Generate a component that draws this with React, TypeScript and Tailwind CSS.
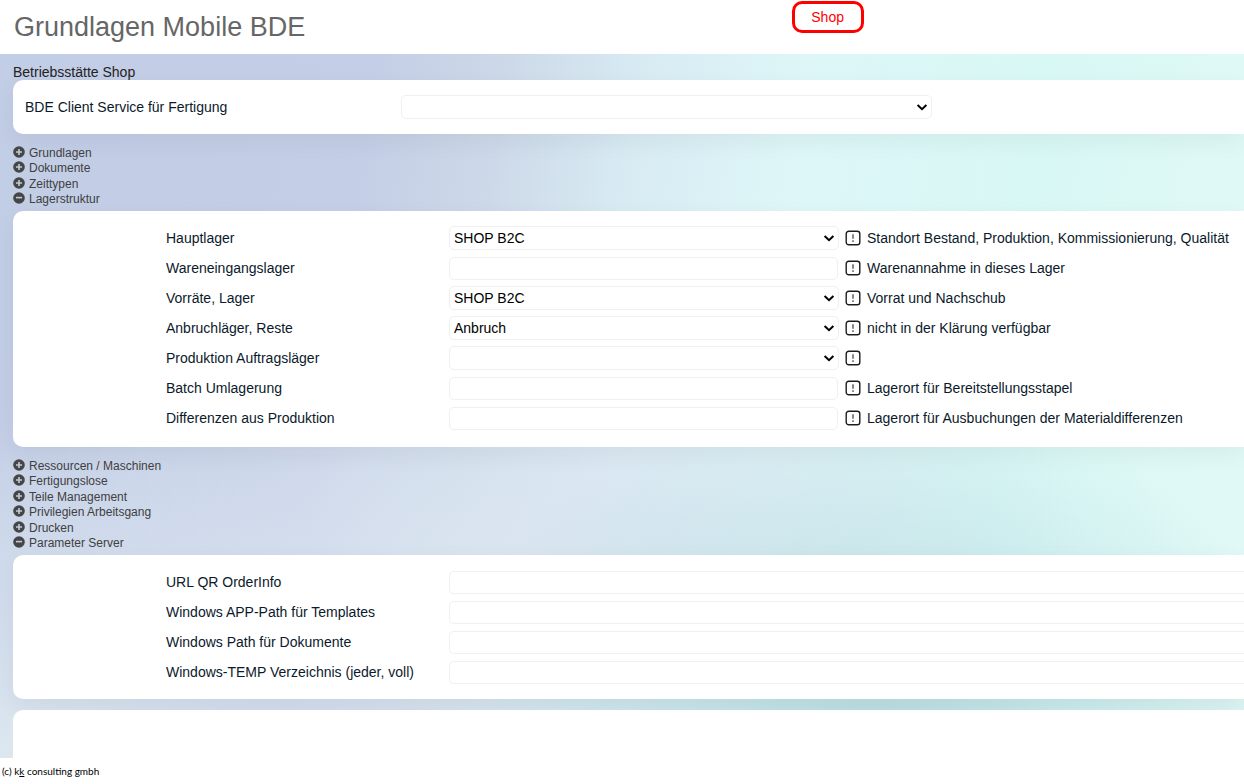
import React from 'react';

interface StorageField {
  id: string;
  label: string;
  type: 'select' | 'input';
  value?: string;
  note?: string;
}

const storageFields: StorageField[] = [
  { id: 'hauptlager', label: 'Hauptlager', type: 'select', value: 'SHOP B2C', note: 'Standort Bestand, Produktion, Kommissionierung, Qualität' },
  { id: 'wareneingang', label: 'Wareneingangslager', type: 'input', note: 'Warenannahme in dieses Lager' },
  { id: 'vorraete', label: 'Vorräte, Lager', type: 'select', value: 'SHOP B2C', note: 'Vorrat und Nachschub' },
  { id: 'anbruch', label: 'Anbruchläger, Reste', type: 'select', value: 'Anbruch', note: 'nicht in der Klärung verfügbar' },
  { id: 'auftrag', label: 'Produktion Auftragsläger', type: 'select' },
  { id: 'batch', label: 'Batch Umlagerung', type: 'input', note: 'Lagerort für Bereitstellungsstapel' },
  { id: 'differenzen', label: 'Differenzen aus Produktion', type: 'input', note: 'Lagerort für Ausbuchungen der Materialdifferenzen' }
];

const serverFields = [
  { id: 'qr', label: 'URL QR OrderInfo' },
  { id: 'templates', label: 'Windows APP-Path für Templates' },
  { id: 'dokumente', label: 'Windows Path für Dokumente' },
  { id: 'temp', label: 'Windows-TEMP Verzeichnis (jeder, voll)' }
];

function ToggleIcon({ open }: { open: boolean }) {
  return (
    <svg className="h-3 w-3 shrink-0" viewBox="0 0 12 12" aria-hidden="true">
      <circle cx="6" cy="6" r="5.8" fill="#464646" />
      <path d={open ? 'M3 5.6h6' : 'M3 6h6M6 3v6'} stroke="#c3cad8" strokeWidth="1.6" />
    </svg>
  );
}

function NoteIcon() {
  return (
    <svg className="h-4 w-4 shrink-0" viewBox="0 0 16 16" fill="none" aria-hidden="true">
      <rect x="1.2" y="1.2" width="13.6" height="13.6" rx="2.6" stroke="#1c1c1c" strokeWidth="1.4" />
      <path d="M8 4.2v4.6M8 10.3v1.6" stroke="#555" strokeWidth="1.4" />
    </svg>
  );
}

function SectionToggle({ label, open = false }: { label: string; open?: boolean }) {
  return (
    <button type="button" aria-expanded={open} className="flex items-start gap-1 text-xs leading-[15px] text-[#404040]">
      <ToggleIcon open={open} />
      <span>{label}</span>
    </button>
  );
}

function SelectBox({ id, value = '' }: { id: string; value?: string }) {
  return (
    <div className="relative">
      <select id={id} defaultValue={value} className="block h-6 w-full appearance-none rounded-[5px] border border-[#f0f0f0] bg-white pr-5 pl-1 text-black">
        <option value={value}>{value}</option>
      </select>
      <svg className="pointer-events-none absolute top-2 right-1 h-2 w-3" viewBox="0 0 12 8" fill="none" aria-hidden="true">
        <path d="M1.6 2l4.4 4.2L10.4 2" stroke="#000" strokeWidth="2" />
      </svg>
    </div>
  );
}

export default function App() {
  return (
    <div className="flex h-screen flex-col overflow-hidden bg-white font-['Liberation_Sans',Arial,sans-serif] text-sm text-[#0b1a2b]">
      <header className="grid h-[54px] shrink-0 grid-cols-[7fr_4fr] items-start">
        <h1 className="pl-3.5 text-[27px] leading-[54px] text-[#666]">Grundlagen Mobile BDE</h1>
        <div className="pt-px">
          <button type="button" className="h-8 w-[72px] rounded-[10px] border-3 border-[#f00] text-[#f00]">
            Shop
          </button>
        </div>
      </header>

      <main className="min-h-0 flex-1 overflow-hidden bg-[radial-gradient(ellipse_36%_46%_at_70%_96%,#b9dde2_0%,transparent_100%),radial-gradient(ellipse_46%_44%_at_42%_74%,#dbe5f1_0%,transparent_100%),radial-gradient(ellipse_34%_50%_at_0%_100%,#dce7f0_0%,transparent_100%),linear-gradient(98deg,#c2cde6_0%,#c4cee6_28%,#cdd9e9_38%,#d8ebf3_48%,#def6f8_60%,#d8f8f5_78%,#e2f9f6_100%)] pt-2.5 pl-[13px]">
        <h2 className="leading-4 text-[#222]">Betriebsstätte Shop</h2>
        <section className="flex h-[54px] items-center rounded-l-[10px] bg-white pl-3 shadow-[0_8px_24px_rgba(0,0,0,0.05)]">
          <label htmlFor="client" className="w-[376px]">BDE Client Service für Fertigung</label>
          <div className="w-[531px]">
            <SelectBox id="client" />
          </div>
        </section>

        <nav className="mt-3 mb-1 flex h-[61px] flex-col items-start justify-between">
          <SectionToggle label="Grundlagen" />
          <SectionToggle label="Dokumente" />
          <SectionToggle label="Zeittypen" />
          <SectionToggle label="Lagerstruktur" open />
        </nav>

        {/* Lagerstruktur */}
        <section className="rounded-l-[10px] bg-white pt-3 pb-3.5 pl-[153px] shadow-[0_8px_24px_rgba(0,0,0,0.05)]">
          {storageFields.map(field => (
            <div key={field.id} className="grid h-[30px] grid-cols-[283px_390px_1fr] items-center">
              <label htmlFor={field.id}>{field.label}</label>
              {field.type === 'select' ? (
                <SelectBox id={field.id} value={field.value} />
              ) : (
                <input id={field.id} type="text" className="h-[23px] w-[389px] rounded-[5px] border border-[#f0f0f0] bg-white px-1" />
              )}
              <div className="flex items-center gap-1.5 pl-1.5 whitespace-nowrap">
                <NoteIcon />
                <span>{field.note}</span>
              </div>
            </div>
          ))}
        </section>

        <nav className="mt-3 mb-1 flex h-[92px] flex-col items-start justify-between">
          <SectionToggle label="Ressourcen / Maschinen" />
          <SectionToggle label="Fertigungslose" />
          <SectionToggle label="Teile Management" />
          <SectionToggle label="Privilegien Arbeitsgang" />
          <SectionToggle label="Drucken" />
          <SectionToggle label="Parameter Server" open />
        </nav>

        {/* Parameter Server */}
        <section className="rounded-l-[10px] bg-white py-3 pl-[153px] shadow-[0_8px_24px_rgba(0,0,0,0.05)]">
          {serverFields.map(field => (
            <div key={field.id} className="grid h-[30px] grid-cols-[283px_1fr] items-center">
              <label htmlFor={field.id}>{field.label}</label>
              <input id={field.id} type="text" className="h-[23px] w-full rounded-l-[5px] border border-r-0 border-[#f0f0f0] bg-white px-1" />
            </div>
          ))}
        </section>

        <section className="mt-[11px] h-20 rounded-l-[10px] bg-white" />
      </main>

      <footer className="h-[26px] shrink-0 pl-0.5 font-[Lato,sans-serif] text-[10px] leading-[26px] text-black">
        (c) k<span className="underline">k</span> consulting gmbh
      </footer>
    </div>
  );
}
